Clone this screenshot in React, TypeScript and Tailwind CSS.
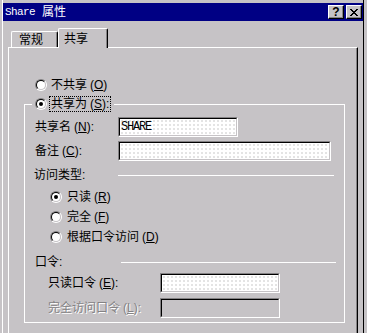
import React from "react";

function Radio({ checked }: { checked?: boolean }) {
  return (
    <span className="inline-block w-[12px] h-[12px] shrink-0 rounded-full border border-t-[#848284] border-l-[#848284] border-b-white border-r-white">
      <span className="flex w-full h-full items-center justify-center rounded-full border border-t-black border-l-black border-b-[#c6c3c6] border-r-[#c6c3c6] bg-white">
        {checked && <span className="w-[4px] h-[4px] rounded-full bg-black" />}
      </span>
    </span>
  );
}

function Hot({ text, k, colon }: { text: string; k: string; colon?: boolean }) {
  return (
    <span className="whitespace-nowrap">
      {text}
      <span className="ml-[3px]">(</span>
      <span className="underline">{k}</span>)
      {colon && ":"}
    </span>
  );
}

function Field({ w, value, disabled }: { w: string; value?: string; disabled?: boolean }) {
  return (
    <div className={`h-[20px] ${w} border border-t-[#848284] border-l-[#848284] border-b-white border-r-white`}>
      <div
        className={
          disabled
            ? "h-full border border-t-black border-l-black border-b-[#c6c3c6] border-r-[#c6c3c6] bg-[#c6c3c6]"
            : "h-full flex items-center pl-[1px] border border-t-black border-l-black border-b-[#c6c3c6] border-r-[#c6c3c6] bg-white bg-[radial-gradient(circle,#e2e2e2_0.7px,transparent_0.8px)] bg-[length:4px_4px]"
        }
      >
        {value && (
          <span className="font-['Liberation_Mono',monospace] text-[12px] tracking-[-1.2px] leading-none">
            {value}
          </span>
        )}
      </div>
    </div>
  );
}

function TitleButton({ children }: { children: React.ReactNode }) {
  return (
    <div className="w-[16px] h-[14px] flex items-center justify-center bg-[#c6c3c6] border border-t-white border-l-white border-b-black border-r-black shadow-[inset_-1px_-1px_0_#848284]">
      {children}
    </div>
  );
}

export default function App() {
  return (
    <div className="w-[367px] h-[333px] overflow-hidden bg-[#c6c3c6] pl-[2px] pr-[3px] text-[12px] leading-none text-black font-['Liberation_Sans','Noto_Sans_CJK_SC',sans-serif]">
      <div className="h-full border-l border-r border-l-white border-r-black pt-[3px]">
        {/* title bar */}
        <div className="h-[18px] bg-[#000084] flex items-center pl-[2px] pr-[1px]">
          <span className="text-white flex items-center">
            <span className="font-['Liberation_Mono',monospace] text-[11px] tracking-[-0.6px]">Share</span>
            <span className="ml-[7px]">属性</span>
          </span>
          <div className="ml-auto flex gap-[2px]">
            <TitleButton>
              <span className="font-bold text-[12px] leading-none font-['Liberation_Sans',sans-serif]">?</span>
            </TitleButton>
            <TitleButton>
              <svg width="8" height="7" viewBox="0 0 8 7" shapeRendering="crispEdges">
                <path d="M0 0h2v1H0zM6 0h2v1H6zM1 1h2v1H1zM5 1h2v1H5zM2 2h4v1H2zM3 3h2v1H3zM2 4h4v1H2zM1 5h2v1H1zM5 5h2v1H5zM0 6h2v1H0zM6 6h2v1H6z" fill="#000" />
              </svg>
            </TitleButton>
          </div>
        </div>

        {/* tabs */}
        <div className="mt-[7px] mx-[5px] h-[19px] flex items-end pl-[3px]">
          <div className="w-[47px] h-[16px] flex items-center pl-[7px] border-t border-l border-r border-t-white border-l-white border-r-black shadow-[inset_-1px_0_0_#848284] rounded-t-[2px]">
            常规
          </div>
          <div className="relative z-10 w-[50px] h-[20px] -mb-[1px] flex items-start pt-[4px] pl-[5px] bg-[#c6c3c6] border-t border-l border-r border-t-white border-l-white border-r-black shadow-[inset_-1px_0_0_#848284] rounded-t-[2px]">
            共享
          </div>
        </div>

        {/* panel */}
        <div className="mx-[5px] h-[300px] border-t border-l border-r border-t-white border-l-white border-r-black shadow-[inset_-1px_0_0_#848284]">
          <div className="mt-[29px] ml-[26px] h-[16px] flex items-center gap-[4px]">
            <Radio />
            <Hot text="不共享" k="O" />
          </div>

          <fieldset className="mt-[3px] ml-[15px] w-[321px] border border-white pb-[4px]">
            <legend className="ml-[7px] h-[16px] px-[3px] flex items-center gap-[2px]">
              <Radio checked />
              <span className="h-[16px] flex items-center px-[1px] border border-dotted border-black">
                <Hot text="共享为" k="S" colon />
              </span>
            </legend>

            <div className="mt-[5px] h-[20px] flex items-center pl-[10px]">
              <span className="w-[83px]">
                <Hot text="共享名" k="N" colon />
              </span>
              <Field w="w-[120px]" value="SHARE" />
            </div>
            <div className="mt-[4px] h-[20px] flex items-center pl-[10px]">
              <span className="w-[83px]">
                <Hot text="备注" k="C" colon />
              </span>
              <Field w="w-[213px]" />
            </div>

            <div className="mt-[7px] h-[14px] flex items-center pl-[9px] pr-[10px]">
              <span className="w-[84px]">访问类型:</span>
              <div className="flex-1 h-px bg-white" />
            </div>

            <div className="mt-[5px] pl-[25px] flex flex-col">
              <div className="h-[20px] flex items-center gap-[5px]">
                <Radio checked />
                <Hot text="只读" k="R" />
              </div>
              <div className="h-[20px] flex items-center gap-[5px]">
                <Radio />
                <Hot text="完全" k="F" />
              </div>
              <div className="h-[20px] flex items-center gap-[5px]">
                <Radio />
                <Hot text="根据口令访问" k="D" />
              </div>
            </div>

            <div className="mt-[8px] h-[14px] flex items-center pl-[10px] pr-[8px]">
              <span className="w-[86px]">口令:</span>
              <div className="flex-1 h-px bg-white" />
            </div>

            <div className="mt-[4px] h-[20px] flex items-center pl-[23px]">
              <span className="w-[112px]">
                <Hot text="只读口令" k="E" colon />
              </span>
              <Field w="w-[120px]" />
            </div>
            <div className="mt-[5px] h-[20px] flex items-center pl-[23px]">
              <span className="w-[112px] text-[#848284] [text-shadow:1px_1px_0_#fff]">
                <Hot text="完全访问口令" k="L" colon />
              </span>
              <Field w="w-[120px]" disabled />
            </div>
          </fieldset>
        </div>
      </div>
    </div>
  );
}
